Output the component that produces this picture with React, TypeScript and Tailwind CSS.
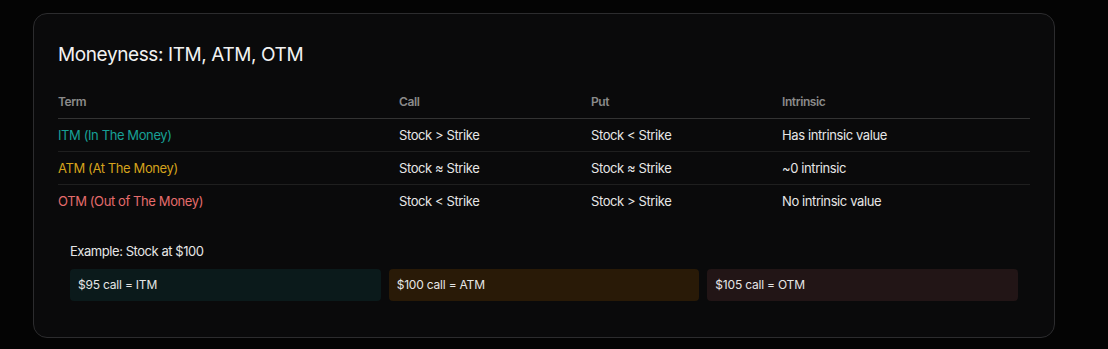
import React from "react";

const rows = [
  { term: "ITM (In The Money)", color: "text-[#17a096]", call: "Stock > Strike", put: "Stock < Strike", intrinsic: "Has intrinsic value" },
  { term: "ATM (At The Money)", color: "text-[#d4a21c]", call: "Stock ≈ Strike", put: "Stock ≈ Strike", intrinsic: "~0 intrinsic" },
  { term: "OTM (Out of The Money)", color: "text-[#e56c6c]", call: "Stock < Strike", put: "Stock > Strike", intrinsic: "No intrinsic value" },
];

const examples = [
  { label: "$95 call = ITM", bg: "bg-[#0b1a1b]" },
  { label: "$100 call = ATM", bg: "bg-[#291a07]" },
  { label: "$105 call = OTM", bg: "bg-[#221516]" },
];

export default function App() {
  return (
    <div
      className="min-h-[349px] w-full bg-[#040404] pt-[13px] pl-[33px]"
      style={{ fontFamily: "Inter, 'Noto Sans', sans-serif" }}
    >
      <div className="w-[1022px] rounded-[14px] border border-[#2c2c2e] bg-[#0a0a0b] px-6 pt-[26px] pb-6">
        <h2 className="mb-[17px] pt-px text-[19px] leading-7 font-normal tracking-[-0.4px] text-[#f2f2f2]">
          Moneyness: ITM, ATM, OTM
        </h2>

        <table className="w-full border-collapse text-left tracking-[-0.4px]">
          <thead>
            <tr className="border-b border-[#333333]">
              <th className="w-[341px] py-2 text-xs leading-4 font-semibold text-[#8a8a8a]">Term</th>
              <th className="w-[192px] py-2 text-xs leading-4 font-semibold text-[#8a8a8a]">Call</th>
              <th className="w-[191px] py-2 text-xs leading-4 font-semibold text-[#8a8a8a]">Put</th>
              <th className="py-2 text-xs leading-4 font-semibold text-[#8a8a8a]">Intrinsic</th>
            </tr>
          </thead>
          <tbody>
            {rows.map((r, i) => (
              <tr key={r.term} className={i < rows.length - 1 ? "border-b border-[#1f1f1f]" : ""}>
                <td className={`py-2 text-[13px] leading-4 ${r.color}`}>{r.term}</td>
                <td className="py-2 text-[13px] leading-4 text-[#e6e6e6]">{r.call}</td>
                <td className="py-2 text-[13px] leading-4 text-[#e6e6e6]">{r.put}</td>
                <td className="py-2 text-[13px] leading-4 text-[#e6e6e6]">{r.intrinsic}</td>
              </tr>
            ))}
          </tbody>
        </table>

        {/* example strip */}
        <div className="mt-3 rounded-lg p-3">
          <p className="mb-2 text-[13px] leading-5 tracking-[-0.45px] text-[#e6e6e6]">Example: Stock at $100</p>
          <div className="grid grid-cols-3 gap-2">
            {examples.map((e) => (
              <div
                key={e.label}
                className={`flex h-8 items-center rounded-[4px] px-2 text-xs tracking-[-0.2px] text-[#e6e6e6] ${e.bg}`}
              >
                {e.label}
              </div>
            ))}
          </div>
        </div>
      </div>
    </div>
  );
}
